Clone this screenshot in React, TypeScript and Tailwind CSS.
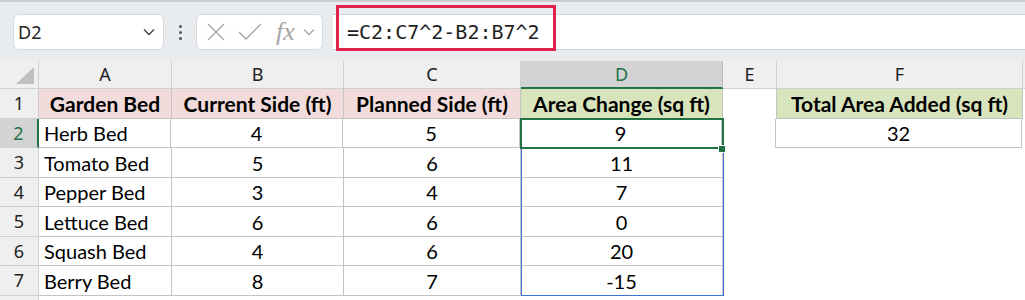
import React from "react";

const cols = [
  { key: "A", w: 133 },
  { key: "B", w: 172 },
  { key: "C", w: 177 },
  { key: "D", w: 202 },
  { key: "E", w: 54 },
  { key: "F", w: 246 },
];

const rowHeights = [30, 29, 30, 29, 30, 29, 30];

const rows = [
  ["Herb Bed", "4", "5", "9"],
  ["Tomato Bed", "5", "6", "11"],
  ["Pepper Bed", "3", "4", "7"],
  ["Lettuce Bed", "6", "6", "0"],
  ["Squash Bed", "4", "6", "20"],
  ["Berry Bed", "8", "7", "-15"],
];

const headers = ["Garden Bed", "Current Side (ft)", "Planned Side (ft)", "Area Change (sq ft)"];

const cellFont = { fontFamily: "Lato, 'Open Sans', sans-serif" };
const uiFont = { fontFamily: "'Noto Sans', 'Open Sans', sans-serif" };

const Toolbar = () => (
  <div className="relative h-[61px] bg-[#e9ecef] border-t-2 border-[#c9cdd2]">
    <div className="flex items-center pt-[11px] h-[49px]">
      <div
        className="ml-[13px] w-[151px] h-9 rounded-md bg-white border border-[#d6d8db] flex items-center justify-between pl-[4px] pr-[8px]"
        style={uiFont}
      >
        <span className="text-[18px] text-[#1f1f1f]">D2</span>
        <svg width="12" height="8" viewBox="0 0 12 8" fill="none" stroke="#444" strokeWidth="1.4">
          <path d="M1 1.5l5 5 5-5" />
        </svg>
      </div>
      <div className="w-[32px] flex flex-col items-center gap-[3px]">
        <span className="w-[3px] h-[3px] bg-[#555] rounded-full" />
        <span className="w-[3px] h-[3px] bg-[#555] rounded-full" />
        <span className="w-[3px] h-[3px] bg-[#555] rounded-full" />
      </div>
      <div className="w-[127px] h-9 rounded-md bg-white border border-[#d6d8db] flex items-center pl-[9px]">
        <svg width="20" height="20" viewBox="0 0 20 20" fill="none" stroke="#a6a6a6" strokeWidth="1.3">
          <path d="M2 2l16 16M18 2L2 18" />
        </svg>
        <svg className="ml-[12px]" width="24" height="18" viewBox="0 0 24 18" fill="none" stroke="#a6a6a6" strokeWidth="1.3">
          <path d="M1 9l7 7L23 1" />
        </svg>
        <span
          className="ml-[14px] text-[26px] italic text-[#a6a6a6] leading-none"
          style={{ fontFamily: "'Liberation Serif', serif" }}
        >
          fx
        </span>
        <svg className="ml-[8px]" width="12" height="8" viewBox="0 0 12 8" fill="none" stroke="#a6a6a6" strokeWidth="1.3">
          <path d="M1 1.5l5 5 5-5" />
        </svg>
      </div>
      <div className="ml-[10px] flex-1 h-9 bg-white border-y border-[#d0d3d6] flex items-center pl-[14px]">
        <span className="text-[20px] text-[#1f1f1f]" style={{ fontFamily: "'DejaVu Sans Mono', monospace" }}>
          =C2:C7^2-B2:B7^2
        </span>
      </div>
    </div>
    <div className="absolute left-[336px] top-[3px] w-[220px] h-[46px] border-[3px] border-[#e0224c]" />
  </div>
);

const Sheet = () => (
  <div className="relative bg-white" style={cellFont}>
    {/* column headers */}
    <div className="flex h-[28px] bg-[#efefef]" style={uiFont}>
      <div className="w-[39px] shrink-0 border-r border-b border-[#cfcfcf] relative">
        <svg className="absolute right-[4px] bottom-[4px]" width="18" height="17" viewBox="0 0 18 17">
          <path d="M18 0V17H0Z" fill="#c0c0c0" />
        </svg>
      </div>
      {cols.map((c) => (
        <div
          key={c.key}
          style={{ width: c.w }}
          className={
            c.key === "D"
              ? "shrink-0 border-r border-[#bdbdbd] border-b-2 border-b-[#217346] bg-[#d3d3d3] text-[#217346] text-[18px] flex items-center justify-center"
              : "shrink-0 border-r border-b border-[#cfcfcf] text-[#222] text-[18px] flex items-center justify-center"
          }
        >
          {c.key}
        </div>
      ))}
      <div className="flex-1 border-b border-[#cfcfcf]" />
    </div>

    {/* row 1: headers */}
    <div className="flex" style={{ height: rowHeights[0] }}>
      <div
        className="w-[39px] shrink-0 bg-[#efefef] border-r border-b border-[#cfcfcf] flex items-center justify-center text-[18px] text-[#222]"
        style={uiFont}
      >
        1
      </div>
      {headers.map((h, i) => (
        <div
          key={h}
          style={{ width: cols[i].w }}
          className={
            (i === 3 ? "bg-[#d8e4bc]" : "bg-[#f2dcdb]") +
            " shrink-0 border-r border-b border-[#c4c4c4] flex items-center justify-center font-bold text-[21px] text-black whitespace-nowrap"
          }
        >
          {h}
        </div>
      ))}
      <div style={{ width: cols[4].w }} className="shrink-0 border-r border-[#c4c4c4]" />
      <div
        style={{ width: cols[5].w }}
        className="shrink-0 bg-[#d8e4bc] border-r border-b border-[#c4c4c4] flex items-center justify-center font-bold text-[21px] text-black whitespace-nowrap"
      >
        Total Area Added (sq ft)
      </div>
    </div>

    {/* data rows */}
    {rows.map((r, ri) => (
      <div key={ri} className="flex" style={{ height: rowHeights[ri + 1] }}>
        <div
          className={
            ri === 0
              ? "w-[39px] shrink-0 bg-[#d3d3d3] border-r-2 border-r-[#217346] border-b border-[#cfcfcf] flex items-center justify-center text-[18px] text-[#217346]"
              : "w-[39px] shrink-0 bg-[#efefef] border-r border-b border-[#cfcfcf] flex items-center justify-center text-[18px] text-[#222]"
          }
          style={uiFont}
        >
          {ri + 2}
        </div>
        <div
          style={{ width: cols[0].w - (ri === 0 ? 1 : 0) }}
          className="shrink-0 border-r border-b border-[#c4c4c4] flex items-center pl-[5px] text-[20px] text-black"
        >
          {r[0]}
        </div>
        {r.slice(1).map((v, ci) => (
          <div
            key={ci}
            style={{ width: cols[ci + 1].w }}
            className="shrink-0 border-r border-b border-[#c4c4c4] flex items-center justify-center text-[20px] text-black"
          >
            {v}
          </div>
        ))}
        <div
          style={{ width: cols[4].w }}
          className={ri === 0 ? "shrink-0 border-r border-[#c4c4c4]" : "shrink-0"}
        />
        {ri === 0 && (
          <div
            style={{ width: cols[5].w }}
            className="shrink-0 border-r border-b border-[#c4c4c4] flex items-center justify-center text-[20px] text-black"
          >
            32
          </div>
        )}
      </div>
    ))}

    {/* row 8 partial */}
    <div className="flex h-[10px]">
      <div className="w-[39px] shrink-0 bg-[#efefef] border-r border-[#cfcfcf]" />
    </div>

    {/* spill range outline D2:D7 */}
    <div className="absolute left-[521px] top-[57px] w-[203px] h-[178px] border border-[#3f74d4] pointer-events-none" />
    {/* active cell D2 */}
    <div className="absolute left-[520px] top-[57px] w-[204px] h-[31px] border-2 border-[#217346] pointer-events-none" />
    <div className="absolute left-[718px] top-[84px] w-[8px] h-[8px] bg-[#217346] border border-white" />
  </div>
);

export default function App() {
  return (
    <div className="w-[1025px] h-[300px] overflow-hidden bg-white">
      <Toolbar />
      <Sheet />
    </div>
  );
}
